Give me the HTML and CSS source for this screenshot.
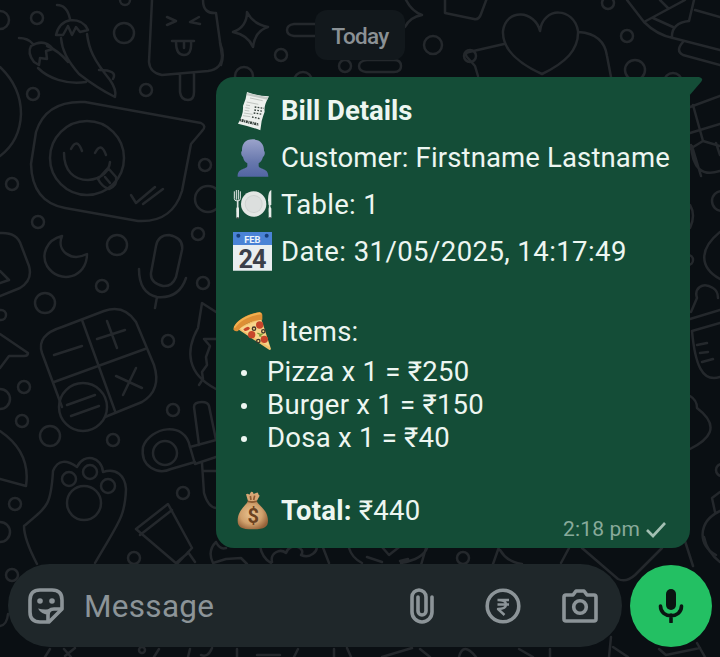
FILE: index.html
```html
<!DOCTYPE html>
<html lang="en">
<head>
<meta charset="utf-8">
<title>Chat</title>
<link rel="stylesheet" href="styles.css">
</head>
<body>
<svg class="wallpaper" viewBox="0 0 720 657" aria-hidden="true">
  <!-- small bubbles -->
  <circle cx="37" cy="18" r="6"/><circle cx="0" cy="20" r="9"/><circle cx="125" cy="0" r="5"/><circle cx="124" cy="33" r="10"/>
  <circle cx="33" cy="94" r="6"/><circle cx="146" cy="90" r="6"/><circle cx="205" cy="165" r="6"/><circle cx="208" cy="199" r="13"/>
  <circle cx="12" cy="184" r="6"/><circle cx="38" cy="222" r="6"/><circle cx="117" cy="245" r="10"/><circle cx="198" cy="234" r="6"/>
  <circle cx="203" cy="283" r="6"/><circle cx="102" cy="286" r="6"/><circle cx="45" cy="303" r="10"/><circle cx="1" cy="315" r="5"/>
  <circle cx="168" cy="341" r="6"/><circle cx="24" cy="387" r="6"/><circle cx="0" cy="399" r="10"/><circle cx="173" cy="410" r="6"/>
  <circle cx="22" cy="421" r="6"/><circle cx="50" cy="436" r="10"/><circle cx="113" cy="440" r="6"/><circle cx="183" cy="493" r="6"/>
  <circle cx="15" cy="504" r="6"/><circle cx="0" cy="532" r="10"/><circle cx="134" cy="558" r="6"/><circle cx="12" cy="575" r="6"/>
  <circle cx="281" cy="55" r="6"/><circle cx="345" cy="66" r="6"/><circle cx="433" cy="45" r="9"/><circle cx="470" cy="56" r="6"/>
  <circle cx="244" cy="76" r="9"/><circle cx="303" cy="81" r="9"/><circle cx="608" cy="3" r="6"/><circle cx="627" cy="36" r="6"/>
  <circle cx="635" cy="70" r="10"/><circle cx="673" cy="82" r="9"/><circle cx="722" cy="201" r="10"/><circle cx="688" cy="260" r="5"/>
  <circle cx="722" cy="470" r="6"/><circle cx="463" cy="558" r="6"/><circle cx="142" cy="650" r="3"/>
  <!-- chillies -->
  <path d="M57 5q10 0 13 14M56 35q3-13 15-15 13 0 17 10l-8 2-4-5-4 8-4-9-5 9zM61 38c1 12 6 22 18 36q18 14 36 23 2-7-5-17C93 59 89 49 87 34M19 38q9 0 14 6M31 46q13-8 22 3l-7 2 1 8-7-1-1 7-5-3q-7-9-3-16M38 68c10 10 28 17 48 14M47 46q12 5 21 16M99 70q19 0 14 9"/>
  <!-- ice lolly -->
  <path d="M152 0l-3 62q1 11 13 13l46-4q14-2 14-15l-6-43q-13 1-13-13M180 74v18q1 8 8 8 6 0 6-8V74M167 17l9 4-9 4M199 17l-9 5 10 2M172 41h22M176 42q0 13 8 13t7-13M184 42v6"/>
  <!-- sticker bubble -->
  <path d="M0 67q21 20 21 47-1 27-21 42M85 102l116 21q6 3 1 8l-11 13-9 47q-10 32-44 30l-73-13q-33-6-34-44l5-32q10-32 49-30z"/>
  <circle cx="87" cy="158" r="37"/>
  <path d="M71 149q6-12 11 2M95 153q6-12 11 2M64 153c0 18 10 27 24 27 14-1 21-9 22-18M98 179l10-11 8 9q2 8-7 12-7-2-11-10zM105 177l5 6M131 195l5 8 19-16M143 204l20-15"/>
  <!-- moon, mic and left edge shapes -->
  <path d="M62 236c-16 4-21 19-15 30 12 19 40 12 40-12-16 8-31-3-25-18zM156 246q2-11 13-11 15 3 13 15l-6 27q-4 10-13 9-13-3-12-13zM139 269q0 24 18 28 22 2 29-19M157 297l-2 11M0 233q17-1 21 12l8 21q4 14-9 22l-20 8M0 271l9 9-9 3M0 334l28 19q0 3-4 3H9l-9 12"/>
  <!-- calculator -->
  <path d="M62 327l42-16q20-7 32 11l18 43q8 25-12 37l-37 15M62 407l-20-54q-6-18 20-26M82 320l33 91M54 382l91-33M54 355l28-9M97 339l28-9M107 321l10 27M116 376l26 12M136 368l-13 27"/>
  <circle cx="83" cy="407" r="24"/><path d="M67 405l28-10M71 416l28-10"/>
  <!-- cat and knife -->
  <path d="M216 312l-14-9-4 25c-13 23-11 46 18 61M204 339h12M204 339l6 7-4 11 1 8-5 7 1 7-4 6M194 407q0-5 8-5 6 0 7 4l7 34M194 407l5 38M216 440l-26 7 5 17 21-7M216 471h-13M202 463l2 30q4 14 12 15"/>
  <circle cx="165" cy="453" r="12"/><path d="M190 447c-5-27-40-20-47 0-3 20 15 28 28 22l24-7"/>
  <!-- paw -->
  <path d="M0 431q31 21 26 55L0 479M37 564q-13-25-13-38c24-20 27-21 29-55 5-12 14-11 24-4 7-15 25-10 26 5 13-4 22 3 23 17-1 29-8 34-31 74"/>
  <circle cx="69" cy="479" r="7"/><circle cx="90" cy="472" r="7"/><circle cx="108" cy="486" r="7"/><circle cx="84" cy="503" r="17"/>
  <!-- paint tube and hat -->
  <path d="M136 529l32-25 24 44-15 16-41-35M140 535l32-25M188 552l7 10M176 563l12-10M216 542q-9 9-3 21l13-4 15-1 6 6M216 542q4 8 10 6"/>
  <!-- stars and top pills -->
  <path d="M247 12q6 12 21 15-13 4-15 20-5-12-20-15 14-5 14-20zM405-2q6 13 17 17-12 2-17 12M320 24h-26q-7 1-7 6t7 6h26M367 60h27q7 0 7 6t-7 6h-28q-7-1-7-6t8-6zM445 0v13l29 6q5 1 7-5l6-16M220 43q5 11 1 22"/>
  <!-- heart -->
  <path d="M540 31c-5-21-34-23-37 0-1 19 17 33 39 43 23-11 37-24 36-43-4-24-35-25-38 0M478 76l-3-10-8-9q-3-4 2-5l35-8M579 32q25 2 28 24l4 21"/>
  <!-- pencil and gift on the right -->
  <path d="M627 0l17 22 41-22M644 22q13 13 29 16l47 12M660 0l8 8M653 18l20 9M672 38q-1-15 17-17l5-21M695 10l25 7M683 42q-8 9 0 13l37 10M690 107l30-11M693 105l10 36M690 133l30-9M703 141l-13 8M703 141l17 5M691 145q2 35 29 26M716 143l4 12M692 146l9 30"/>
  <path d="M690 205q6 10 0 23M720 232c-21 17-21 35 0 47M691 312l6-14c-3-9 5-17 16-10q5 3 5 10M690 319l30-9M692 331l28-8M692 331c3 33 10 52 28 46M697 345l10-2M700 353l8-1M702 362l11-3M690 396q7 4 7 12c25 19 11 32-7 41M720 511c-23 11-22 35-4 44M715 512l-3-14 8-6"/>
  <!-- pieces around the composer -->
  <path d="M260 546q2 12 11 17M272 562c-2-9 8-14 14-9 4-12 21-5 15 2 9 4 18-4 15-10M322 545l7 18M349 548q3 10 13 15M367 557l15 5M382 547l7 8 14-11M401 563q22-4 26-15M400 561l8-2M426 548l-5 17M499 547l-6 17M500 550q7 12 22 14M569 548l-8 15M582 548l36 31q8 4 17-4l27-27M685 541l8 25M704 537q3 15 16 25M0 626q7-1 8-12M45 657l5-8M64 649l7 8M75 648l-10 8M154 657l5-8M188 657l2-8M201 655q7 3 11-7M237 657v-8M257 655h23M294 657l4-8M334 657v-8M351 657l-4-9M382 657l30-9M420 649l10 8M459 657q4-16 17 0M519 649l14 8M550 649v8M611 637l-2 20M613 647l15 10M659 649l7 6 34-7M697 643l8 14"/>
</svg>
<main class="chat">
  <div class="day">Today</div>
  <section class="bubble">
    <svg class="tail" viewBox="0 0 14 20" aria-hidden="true"><path d="M0 0h10q5 1 2 5L0 19z"/></svg>
    <div class="row bold">
      <svg class="emoji" viewBox="39 32 117 117" aria-hidden="true">
        <path fill="#edf0ed" d="M81 35q32 12 66 13-16 28-13 46-4 10-9 28l-4 28q-31-12-67-20 17-27 15-53 9-19 12-42z"/>
        <path fill="#c4cac6" d="M82 38l63 13-3 7-62-13z"/>
        <path stroke="#a7aea8" stroke-width="2" fill="none" d="M90 53l38 8M80 65l35 7M78 74l12 2M76 82l13 2M74 90l14 2M72 98l26 4M69 106l22 3"/>
        <path stroke="#37423d" stroke-width="4" stroke-dasharray="5 4" fill="none" d="M104 80l28 4M103 89l26 4M101 98l26 4M96 110l24 5"/>
        <path stroke="#343e39" stroke-width="8" stroke-dasharray="3 2 6 2" fill="none" d="M60 119l56 14"/>
      </svg><span>Bill Details</span></div>
    <div class="row">
      <svg class="emoji" viewBox="39 172 117 117" aria-hidden="true">
        <defs><linearGradient id="person" x2="0" y2="1"><stop stop-color="#9ba3cb"/><stop offset=".6" stop-color="#6878ad"/><stop offset="1" stop-color="#5265a3"/></linearGradient></defs>
        <path fill="url(#person)" d="M98 176c23 0 35 15 34 35 4 1 3 15-3 18-3 11-7 15-13 19v9c6 11 29 5 29 31H53c0-26 23-20 29-31v-9c-7-4-11-9-13-19-6-3-7-17-3-18-1-20 9-35 32-35z"/>
      </svg><span>Customer: Firstname Lastname</span></div>
    <div class="row">
      <svg class="emoji" viewBox="39 313 117 117" aria-hidden="true">
        <circle cx="101" cy="370" r="38" fill="#e3e6e4"/><circle cx="101" cy="370" r="27" fill="#cfd3d1"/><circle cx="101" cy="370" r="24" fill="#dcdfde"/>
        <path fill="none" stroke="#e5eae8" stroke-width="3" d="M43 332v22q0 7 9 7t9-7v-22M49 328v29M55 328v29"/>
        <path stroke="#dce2df" stroke-width="5" d="M53 359v35M149 366v29"/>
        <path fill="#e5eae8" d="M154 328q-10 3-10 31l2 14h8z"/><path stroke="#e9eeeb" stroke-width="8" stroke-linecap="round" d="M53 384v26M150 384v26"/><path stroke="#34443d" stroke-width="6" d="M53 410v5M150 410v5"/>
      </svg><span class="table-no">Table: 1</span></div>
    <div class="row">
      <svg class="emoji" viewBox="41 456 117 117" aria-hidden="true">
        <path fill="#e9eef0" d="M41 456h117v116H41z"/><path fill="#4a83d6" d="M41 456h117v39H41z"/><circle cx="57" cy="467" r="6" fill="#173e7a"/><circle cx="142" cy="467" r="6" fill="#173e7a"/>
        <text class="cal-month" x="99" y="490">FEB</text><text class="cal-day" x="98" y="563">24</text>
      </svg><span class="date">Date: 31/05/2025, 14:17:49</span></div>
    <div class="row gap">
      <svg class="emoji" viewBox="41 67 117 117" aria-hidden="true">
        <path fill="#f2c06b" d="M52 116l72-34 31 96q-3 5-8 1z"/>
        <path fill="#f7d48a" d="M60 116l64-27 27 83z"/>
        <path fill="#dd8f35" d="M42 118c5-25 47-49 80-50q6 1 7 7v15c-31 2-58 14-73 34-8 3-14-2-14-6z"/>
        <path fill="#f3b04e" d="M43 113c10-23 47-42 79-45l5 6c-34 3-65 18-80 42z"/>
        <g fill="#c7452a"><circle cx="121" cy="106" r="11"/><circle cx="97" cy="135" r="11"/><circle cx="135" cy="149" r="11"/><path d="M72 119q15-14 20-3-5 10-16 8z"/></g>
        <g fill="#f4d77f" stroke="#45352c" stroke-width="4"><circle cx="104" cy="117" r="5"/><circle cx="132" cy="125" r="5"/><circle cx="117" cy="154" r="5"/></g>
        <path stroke="#7d9b35" stroke-width="4" fill="none" d="M114 130l10 5 7-3M119 138l8 2"/>
      </svg><span class="loose">Items:</span></div>
    <ul class="items">
      <li>Pizza x 1 = ₹250</li>
      <li>Burger x 1 = ₹150</li>
      <li>Dosa x 1 = ₹40</li>
    </ul>
    <div class="row gap">
      <svg class="emoji" viewBox="39 602 117 117" aria-hidden="true">
        <defs><radialGradient id="bag" cx=".45" cy=".45" r=".6"><stop stop-color="#eac390"/><stop offset=".6" stop-color="#d0a06c"/><stop offset="1" stop-color="#966239"/></radialGradient></defs>
        <path fill="#d8a775" d="M84 632l-6-20q5-4 10 1l5-8q6-2 8 6l9-4q5-2 5 5l4 4-9 17z"/>
        <path fill="url(#bag)" d="M84 633h26c7 14 34 26 34 58 0 19-12 26-46 26s-45-7-45-26c0-30 23-44 31-58z"/>
        <path stroke="#8e5a31" stroke-width="5" fill="none" d="M83 633q14 5 28-1M91 617l2 12M104 616l-3 13"/>
        <text class="bag-sign" x="100" y="697">$</text>
      </svg><span class="loose"><b>Total:</b> ₹440</span></div>
    <div class="meta"><span>2:18 pm</span><svg viewBox="0 0 22 20" aria-hidden="true"><path d="M2 10l6 6L20 3"/></svg></div>
  </section>
  <footer class="composer">
    <div class="field">
      <svg class="icon sticker" viewBox="0 0 36 36" aria-hidden="true"><path d="M12 2h12q10 0 10 10v9L21 34h-9Q2 34 2 24V12Q2 2 12 2z"/><path d="M20 33v-6q0-6 6-6h7"/><circle class="solid" cx="12" cy="13" r="2.8"/><circle class="solid" cx="24" cy="13" r="2.8"/><path class="solid" d="M10 20.500q8 2 14 0l-3 6q-8 0-11-6z"/></svg>
      <span class="placeholder">Message</span>
      <svg class="icon clip" viewBox="0 0 24 36" aria-hidden="true"><path d="M22 9v15a10 10 0 0 1-20 0V9a7 7 0 0 1 14 0v14a4 4 0 0 1-8 0V9"/></svg>
      <svg class="icon rupee" viewBox="0 0 36 36" aria-hidden="true"><circle cx="18" cy="18" r="15.8"/><path class="thin" d="M12.500 12h11.500M12.500 16.500h11.500M13 12q8 0 8 4.500t-8 4.500l6.500 6"/></svg>
      <svg class="icon camera" viewBox="0 0 36 34" aria-hidden="true"><path d="M4 6h7l3-4h8l3 4h7q2 0 2 2v22q0 2-2 2H4q-2 0-2-2V8q0-2 2-2z"/><circle cx="18" cy="18" r="6.300"/></svg>
    </div>
    <div class="mic"><svg viewBox="0 0 26 34" aria-hidden="true"><rect x="8" y="0" width="10" height="21" rx="5"/><path d="M2.500 17c0 13 21 13 21 0M13 26v7"/></svg></div>
  </footer>
</main>
</body>
</html>
```
FILE: styles.css
```css
* { box-sizing: border-box; }
body {
  margin: 0;
  width: 720px;
  height: 657px;
  overflow: hidden;
  background: #0a0f13;
  font-family: Roboto, "Noto Sans", sans-serif;
}
.wallpaper {
  position: absolute;
  inset: 0;
  width: 720px;
  height: 657px;
  fill: none;
  stroke: #24282c;
  stroke-width: 2.5;
  stroke-linejoin: round;
  stroke-linecap: round;
}
.chat {
  position: relative;
  height: 657px;
  padding: 10px 8px;
  display: flex;
  flex-direction: column;
}
.day {
  align-self: center;
  width: 90px;
  height: 50px;
  margin-bottom: 17px;
  border-radius: 12px;
  background: #12181c;
  color: #8b9195;
  font-size: 22.5px;
  font-weight: 500;
  letter-spacing: -0.7px;
  line-height: 53px;
  text-align: center;
}
.bubble {
  position: relative;
  align-self: flex-end;
  width: 474px;
  height: 471px;
  margin-right: 22px;
  padding: 10px 17px;
  border-radius: 18px 0 18px 18px;
  background: #144d37;
  color: #edf6f1;
  font-size: 27.5px;
  letter-spacing: 0.14px;
}
.tail {
  position: absolute;
  left: 473px;
  top: 0;
  width: 14px;
  height: 20px;
  fill: #144d37;
}
.row {
  display: flex;
  align-items: center;
  gap: 9px;
  height: 47px;
  white-space: nowrap;
}
.row.gap { margin-top: 33px; }
.bold, b { font-weight: 700; }
.bold { letter-spacing: -0.03px; }
.date { letter-spacing: 0.43px; }
.table-no { letter-spacing: 0.3px; }
.loose { letter-spacing: 0.25px; }
.emoji { width: 39px; height: 39px; flex: none; overflow: visible; letter-spacing: 0; }
.cal-month { fill: #eef4fb; font-size: 28px; font-weight: 700; text-anchor: middle; }
.cal-day { fill: #3b3f49; font-size: 76px; font-weight: 700; text-anchor: middle; letter-spacing: -3px; }
.bag-sign { fill: #6c421f; font-size: 60px; font-weight: 700; text-anchor: middle; }
.items {
  margin: 0;
  padding: 0;
  list-style: none;
}
.items li {
  display: flex;
  align-items: center;
  height: 33px;
  padding-left: 8px;
  letter-spacing: 0.25px;
  white-space: nowrap;
}
.items li::before {
  content: "";
  width: 6px;
  height: 6px;
  margin: 3px 20px 0 0;
  border-radius: 50%;
  background: #edf6f1;
}
.meta {
  position: absolute;
  right: 23px;
  bottom: 6px;
  display: flex;
  align-items: center;
  gap: 5px;
  color: #88aa9b;
  font-size: 21px;
  line-height: 25px;
}
.meta svg {
  width: 22px;
  height: 20px;
  fill: none;
  stroke: #a3bfb3;
  stroke-width: 2.6;
}
.composer {
  display: flex;
  gap: 8px;
  margin-top: 16px;
}
.field {
  display: flex;
  align-items: center;
  width: 614px;
  height: 83px;
  padding: 0 24px 0 20px;
  border-radius: 42px;
  background: #1f272a;
}
.icon {
  flex: none;
  fill: none;
  stroke: #8c9498;
  stroke-width: 3.6;
  stroke-linecap: round;
  stroke-linejoin: round;
}
.icon .solid { fill: #8c9498; stroke: none; }
.icon .thin { stroke-width: 2.4; stroke-linecap: butt; }
.sticker { width: 36px; height: 36px; }
.placeholder {
  margin: 2px auto 0 20px;
  color: #8c9498;
  font-size: 31.5px;
  letter-spacing: 0.3px;
}
.clip { width: 24px; height: 36px; margin-right: 51px; }
.rupee { width: 36px; height: 36px; margin-right: 41px; }
.camera { width: 36px; height: 34px; }
.mic {
  display: grid;
  place-items: center;
  width: 82px;
  height: 82px;
  margin-top: 1px;
  border-radius: 50%;
  background: #23c063;
}
.mic svg { width: 26px; height: 34px; fill: #0a1512; }
.mic path { fill: none; stroke: #0a1512; stroke-width: 3.6; stroke-linecap: round; }
```
